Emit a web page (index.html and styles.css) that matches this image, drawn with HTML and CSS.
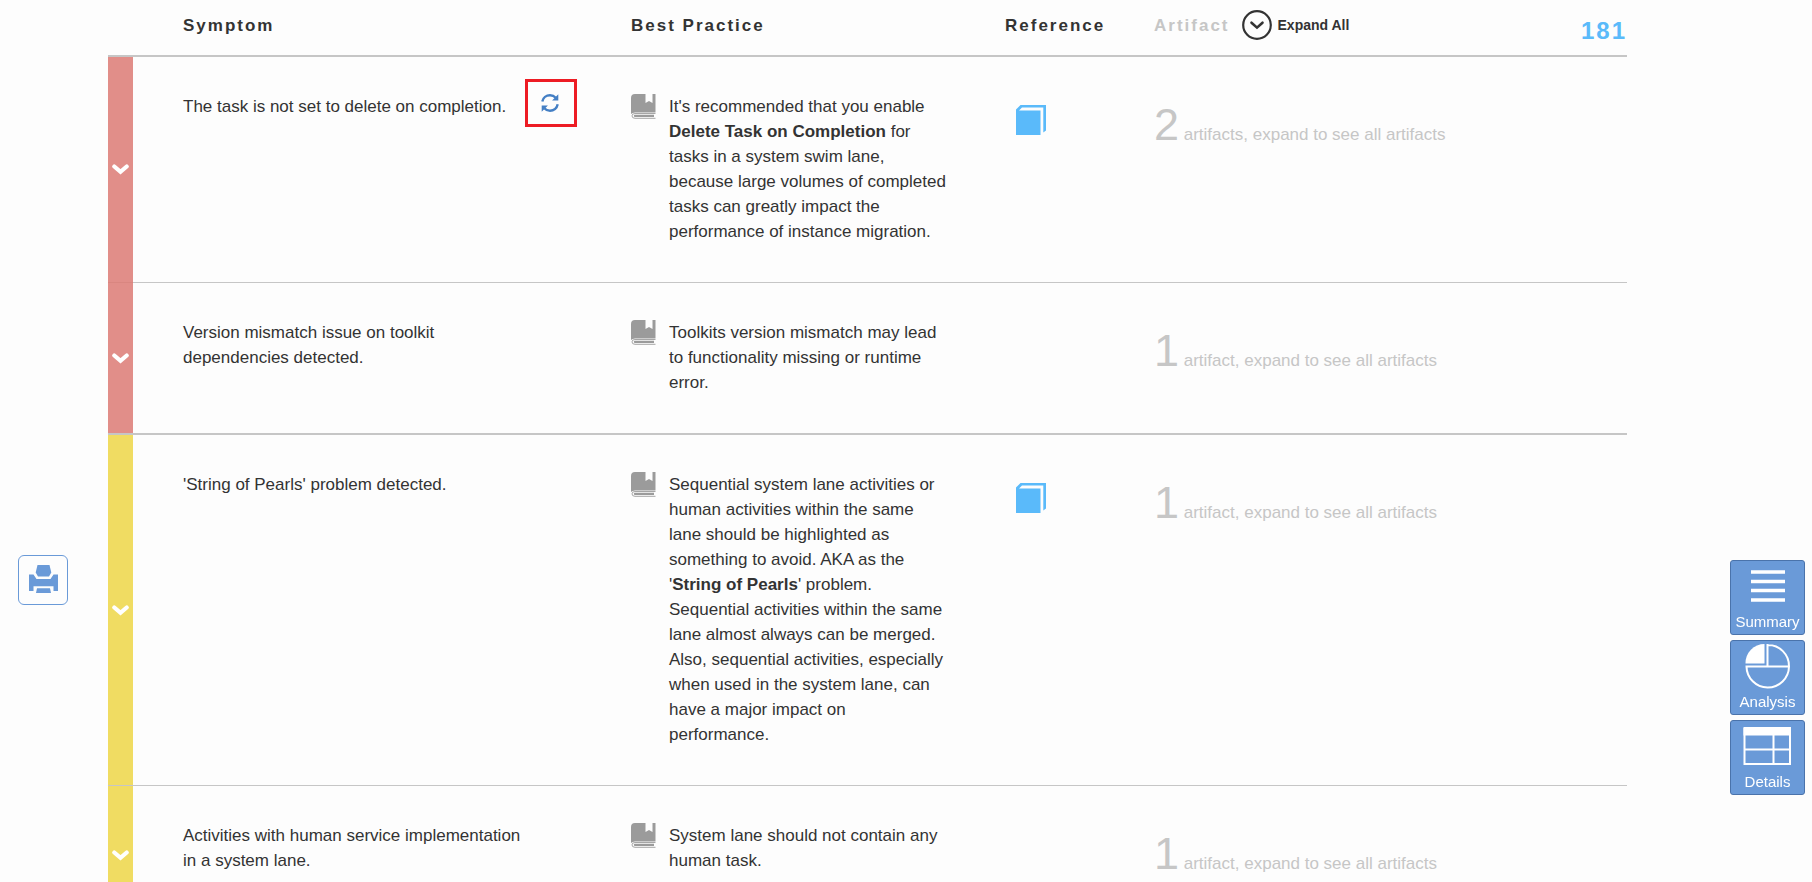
FILE: index.html
```html
<!DOCTYPE html>
<html lang="en">
<head>
<meta charset="utf-8">
<title>Symptoms and best practices</title>
<link rel="stylesheet" href="styles.css">
</head>
<body>
<svg class="sprite" aria-hidden="true">
  <symbol id="chevron" viewBox="0 0 17 11"><path d="M2.300 2.500 8.500 7.800l6.200-5.300" fill="none" stroke="#fff" stroke-width="4.200" stroke-linecap="round"/></symbol>
  <symbol id="book" viewBox="0 0 25 25">
    <path d="M4 0H14.500V9L18 7 21.500 9V0H24.500V18.500H4Q1.500 18.500 0 20V4Q0 0 4 0Z" fill="#9b9b9b"/>
    <path d="M24.500 19.500H4Q1 19.500 1 21.900 1 24.300 4 24.300H24.500" fill="none" stroke="#a6a6a6" stroke-width="1"/>
    <path d="M4 20.800H23V23H4Q2.800 22.900 2.800 21.900 2.800 20.800 4 20.800Z" fill="#9b9b9b"/>
  </symbol>
  <symbol id="volume" viewBox="0 0 30 30">
    <path d="M0 5.500H24.500V30H0Z M0 4.500 4.500 0H30V25.500L27.300 27.500V2.500H6L3 5.500H0Z" fill="#5abafa"/>
  </symbol>
</svg>

<main class="report">
  <table class="issues">
    <colgroup><col class="col-bar"><col class="col-symptom"><col class="col-practice"><col class="col-reference"><col></colgroup>
    <thead>
      <tr>
        <th></th>
        <th class="symptom">Symptom</th>
        <th>Best Practice</th>
        <th>Reference</th>
        <th>
          <div class="artifact-head">
            <span class="muted">Artifact</span>
            <button class="expand-all" type="button">
              <svg width="30" height="30" viewBox="0 0 30 30" aria-hidden="true"><circle cx="15" cy="15" r="13.800" fill="none" stroke="#333" stroke-width="2.200"/><path d="M9.500 12.700 15 17.600l5.500-4.900" fill="none" stroke="#333" stroke-width="2.600" stroke-linecap="round"/></svg>
              <span>Expand All</span>
            </button>
            <span class="total">181</span>
          </div>
        </th>
      </tr>
    </thead>
    <tbody class="high">
      <tr>
        <td class="bar"><button type="button" aria-label="Expand row"><svg><use href="#chevron"/></svg></button></td>
        <td class="symptom">
          <div class="symptom-line">
            <p>The task is not set to delete on completion.</p>
            <a class="refresh" href="#refresh" aria-label="Refresh">
              <svg viewBox="0 0 18 18" aria-hidden="true"><path d="M1.300 7.500C2 3.700 5.300 1.300 9 1.300c2.400 0 4.200.800 5.700 2.500M16.700 10.300C16 14.200 12.700 16.700 9 16.700c-2.400 0-4.200-.800-5.700-2.500" fill="none" stroke="#447fc4" stroke-width="2.400"/><path d="M17.300 .300V6.500H11.100ZM.700 17.700V11.500H6.900Z" fill="#447fc4"/></svg>
            </a>
          </div>
        </td>
        <td><div class="practice"><svg><use href="#book"/></svg><p>It's recommended that you enable <b>Delete Task on Completion</b> for tasks in a system swim lane, because large volumes of completed tasks can greatly impact the performance of instance migration.</p></div></td>
        <td><a class="volume" href="#reference" aria-label="Reference"><svg><use href="#volume"/></svg></a></td>
        <td><p class="artifact"><span>2</span> artifacts, expand to see all artifacts</p></td>
      </tr>
      <tr>
        <td class="bar"><button type="button" aria-label="Expand row"><svg><use href="#chevron"/></svg></button></td>
        <td class="symptom"><div class="symptom-line"><p>Version mismatch issue on toolkit dependencies detected.</p></div></td>
        <td><div class="practice"><svg><use href="#book"/></svg><p>Toolkits version mismatch may lead to functionality missing or runtime error.</p></div></td>
        <td></td>
        <td><p class="artifact"><span>1</span> artifact, expand to see all artifacts</p></td>
      </tr>
    </tbody>
    <tbody class="medium">
      <tr>
        <td class="bar"><button type="button" aria-label="Expand row"><svg><use href="#chevron"/></svg></button></td>
        <td class="symptom"><div class="symptom-line"><p>'String of Pearls' problem detected.</p></div></td>
        <td><div class="practice"><svg><use href="#book"/></svg><p>Sequential system lane activities or human activities within the same lane should be highlighted as something to avoid. AKA as the '<b>String of Pearls</b>' problem. Sequential activities within the same lane almost always can be merged. Also, sequential activities, especially when used in the system lane, can have a major impact on performance.</p></div></td>
        <td><a class="volume" href="#reference" aria-label="Reference"><svg><use href="#volume"/></svg></a></td>
        <td><p class="artifact"><span>1</span> artifact, expand to see all artifacts</p></td>
      </tr>
      <tr>
        <td class="bar"><button type="button" aria-label="Expand row"><svg><use href="#chevron"/></svg></button></td>
        <td class="symptom"><div class="symptom-line"><p>Activities with human service implementation in a system lane.</p></div></td>
        <td><div class="practice"><svg><use href="#book"/></svg><p>System lane should not contain any human task.</p></div></td>
        <td></td>
        <td><p class="artifact"><span>1</span> artifact, expand to see all artifacts</p></td>
      </tr>
    </tbody>
  </table>
</main>

<button class="print" type="button" aria-label="Print">
  <svg viewBox="0 0 32 32" aria-hidden="true"><path d="M10.500 1H22.500L24.300 8.500 22 12.500H11L8.700 8.500Z M2 10.500H6.500L9.500 15H23.500L26.500 10.500H31V27H26.500V22.300H6.500V27H2Z M10 24.300H23L24 29H9Z" fill="#6a9ad8"/></svg>
</button>

<nav class="views">
  <a href="#summary"><svg viewBox="1 0 50 48" aria-hidden="true"><path d="M9 11H43M9 20.500H43M9 29.500H43M9 39H43" stroke="#fff" stroke-width="3.500"/></svg>Summary</a>
  <a href="#analysis"><svg viewBox="1 0 50 48" aria-hidden="true"><path d="M22.500 3V22.500H3.500A19 19 0 0 1 22.500 3Z" fill="#fff"/><path d="M25.500 4A21 21 0 0 1 47 25.500 21.300 21.300 0 0 1 25.500 46.500 21.300 21.300 0 0 1 4.500 25.500H47M25.500 3V26" fill="none" stroke="#fff" stroke-width="2"/></svg>Analysis</a>
  <a href="#details"><svg viewBox="1 0 50 48" aria-hidden="true"><path d="M1.500 6H49V14.500H1.500Z" fill="#fff"/><path d="M2.500 7V43H48V7M2.500 28.500H48M31.500 14V43" fill="none" stroke="#fff" stroke-width="2"/></svg>Details</a>
</nav>
</body>
</html>
```
FILE: styles.css
```css
* { box-sizing: border-box; }

html { overflow: hidden; }

body {
  margin: 0;
  height: 100vh;
  background: #fdfdfd;
  color: #333;
  font: 17px/25px "Liberation Sans", Arial, sans-serif;
}

p { margin: 0; }
svg { display: block; }
.sprite { width: 0; height: 0; position: absolute; }

button {
  padding: 0;
  border: 0;
  background: none;
  color: inherit;
  font: inherit;
  cursor: pointer;
}

.report { padding: 0 185px 0 108px; }

.issues {
  width: 100%;
  border-spacing: 0;
  table-layout: fixed;
}

.col-bar { width: 25px; }
.col-symptom { width: 498px; }
.col-practice { width: 374px; }
.col-reference { width: 149px; }

th {
  height: 55px;
  padding: 13px 0 0;
  text-align: left;
  vertical-align: top;
  letter-spacing: 2px;
}

td {
  height: 140px;
  padding: 37px 0 38px;
  border-top: 1px solid #c6c6c6;
  vertical-align: top;
}

tr:first-child td { border-top-width: 2px; }

.issues .symptom { padding-left: 50px; }

.high .bar { background: #e18e89; }
.high tr + tr .bar { border-top-color: #d98680; }
.medium .bar { background: #f0dc62; }

.issues .bar {
  padding: 0;
  vertical-align: middle;
}

.bar button {
  display: block;
  margin: 0 auto;
}

.bar svg { width: 17px; height: 11px; }

.artifact-head { display: flex; align-items: flex-start; }
.muted { color: #c6c6c6; }

.expand-all {
  display: flex;
  align-items: center;
  gap: 6px;
  margin: -3px 0 0 12px;
  font-size: 14px;
  font-weight: bold;
  letter-spacing: normal;
}

.total {
  margin: 5px 0 0 auto;
  color: #5abafa;
  font-size: 24px;
}

.symptom-line { display: flex; align-items: flex-start; }
.symptom-line p { max-width: 347px; }

.refresh {
  position: relative;
  margin-left: 35px;
}

.refresh svg { width: 18px; height: 18px; }

.refresh::after {
  content: "";
  position: absolute;
  inset: -15px -18px -15px -16px;
  border: 3px solid #ed1c24;
}

.practice { display: flex; gap: 13px; }
.practice p { flex: 0 1 280px; }
.practice svg { flex: none; width: 25px; height: 25px; }

.volume { display: block; padding: 11px 0 0 11px; }
.volume svg { width: 30px; height: 30px; }

.artifact { padding-top: 11px; color: #c6c6c6; line-height: 40px; }
.artifact span { font-size: 45px; }

.print {
  position: fixed;
  left: 18px;
  bottom: 277px;
  width: 50px;
  height: 50px;
  display: grid;
  place-items: center;
  border: 1px solid #6a9ad8;
  border-radius: 6px;
}

.print svg { width: 32px; height: 32px; }

.views {
  position: fixed;
  right: 7px;
  bottom: 87px;
  display: grid;
  gap: 5px;
}

.views a {
  width: 75px;
  height: 75px;
  display: flex;
  flex-direction: column;
  align-items: center;
  border: 1px solid #4a73ab;
  border-radius: 3px;
  background: #6a9ad8;
  color: #fff;
  font-size: 15px;
  text-decoration: none;
}

.views svg { flex: none; width: 50px; height: 48px; }
```
